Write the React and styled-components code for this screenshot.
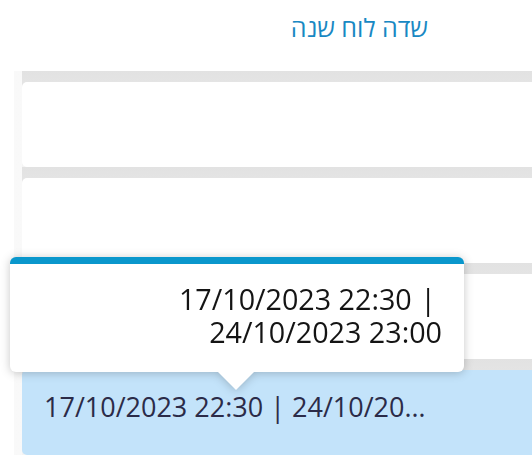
import React from "react";
import styled, { createGlobalStyle } from "styled-components";

const Global = createGlobalStyle`
  html, body { margin: 0; padding: 0; background: #ffffff; }
  body { font-family: "Open Sans", "Noto Sans", sans-serif; overflow: hidden; }
`;

const Page = styled.div`
  position: relative;
  width: 532px;
  height: 459px;
  overflow: hidden;
`;

const Header = styled.header`
  height: 71px;
  box-sizing: border-box;
  padding: 11px 104px 0 0;
`;

const Title = styled.h1`
  margin: 0;
  direction: rtl;
  text-align: right;
  font-size: 25px;
  line-height: 32px;
  font-weight: 400;
  color: #1888c3;
`;

const List = styled.div`
  margin-left: 14px;
  padding-left: 8px;
  background: linear-gradient(to right, #f9f9f9, #eeeeee);
  width: 560px;
`;

const Item = styled.div`
  padding-top: 11px;
  background: linear-gradient(to bottom, #e2e2e2, #f4f4f4);
`;

const Card = styled.div`
  height: 85px;
  box-sizing: border-box;
  display: flex;
  align-items: center;
  padding-left: 22px;
  border-radius: 5px 0 0 5px;
  background: ${(p) => (p.$selected ? "#c3e3fa" : "#ffffff")};
`;

const CardText = styled.span`
  display: block;
  width: 396px;
  white-space: nowrap;
  overflow: hidden;
  text-overflow: ellipsis;
  font-size: 27px;
  line-height: 36px;
  color: #2b2b48;
  margin-top: -12px;
`;

const Sep = styled.span`
  margin: 0;
`;

const Tooltip = styled.div`
  position: absolute;
  left: 10px;
  top: 257px;
  width: 454px;
  height: 115px;
  box-sizing: border-box;
  background: #ffffff;
  border-top: 7px solid #0a97cc;
  border-radius: 6px;
  padding: 18px 22px 0 22px;
  filter: drop-shadow(0 1px 5px rgba(0, 0, 0, 0.22));

  &::after {
    content: "";
    position: absolute;
    left: 208px;
    bottom: -18px;
    width: 0;
    height: 0;
    border-left: 18px solid transparent;
    border-right: 18px solid transparent;
    border-top: 18px solid #ffffff;
  }
`;

const TooltipText = styled.div`
  direction: ltr;
  text-align: right;
  font-size: 28.7px;
  line-height: 33px;
  color: #141414;
`;

const TipSep = styled.span`
  margin: 0 6px 0 1px;
`;

export default function App() {
  return (
    <Page>
      <Global />
      <Header>
        <Title>שדה לוח שנה</Title>
      </Header>
      <List>
        <Item>
          <Card />
        </Item>
        <Item>
          <Card />
        </Item>
        <Item>
          <Card />
        </Item>
        <Item>
          <Card $selected>
            <CardText>
              17/10/2023 22:30 <Sep>|</Sep> 24/10/2023 23:00
            </CardText>
          </Card>
        </Item>
      </List>
      <Tooltip>
        <TooltipText>
          17/10/2023 22:30 <TipSep>|</TipSep> 24/10/2023 23:00
        </TooltipText>
      </Tooltip>
    </Page>
  );
}
